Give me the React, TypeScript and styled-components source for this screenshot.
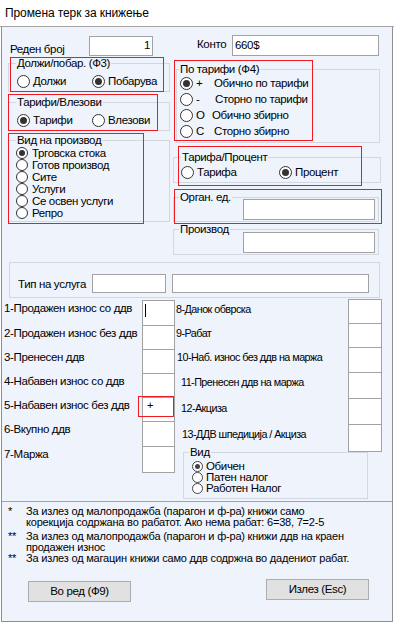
import React from "react";
import styled, { createGlobalStyle } from "styled-components";

const GlobalStyle = createGlobalStyle`
  html, body { margin: 0; padding: 0; background: #ffffff; }
  body {
    font-family: "Liberation Sans", Arial, sans-serif;
    font-size: 11.5px;
    letter-spacing: -0.35px;
    color: #000;
  }
  *, *::before, *::after { box-sizing: border-box; }
`;

const Window = styled.div`
  width: 394px;
  height: 622px;
  display: flex;
  flex-direction: column;
  background: #fff;
`;

const TitleBar = styled.div`
  flex: none;
  height: 27px;
  border-bottom: 1px solid #a3a3a3;
  padding: 5px 0 0 5px;
  font-size: 12px;
  letter-spacing: -0.1px;
  line-height: 16px;
  background: #fff;
`;

const Body = styled.div`
  flex: 1;
  margin-left: 1px;
  width: 392px;
  background: #eef3fc;
  border: 1px solid #8f8f8f;
  border-top: none;
  display: flex;
  flex-direction: column;
`;

const TopArea = styled.div`
  display: grid;
  grid-template-columns: 166px 208px;
  align-items: start;
  padding: 8px 0 0 5px;
`;

const Column = styled.div`
  display: flex;
  flex-direction: column;
`;

const FieldRow = styled.div<{ $pl: number }>`
  display: flex;
  align-items: flex-end;
  height: 21px;
  padding-left: ${(p) => p.$pl}px;
`;

const FieldLabel = styled.span<{ $w: number; $pb: number }>`
  flex: none;
  width: ${(p) => p.$w}px;
  line-height: 14px;
  padding-bottom: ${(p) => p.$pb}px;
  white-space: nowrap;
`;

const TextBox = styled.input<{ $w: number; $h: number; $right?: boolean; $mt?: number }>`
  flex: none;
  display: block;
  width: ${(p) => p.$w}px;
  height: ${(p) => p.$h}px;
  margin: ${(p) => p.$mt ?? 0}px 0 0 0;
  padding: 0 2px 2px 2px;
  border: 1px solid #a2a2a2;
  border-radius: 0;
  background: #fff;
  color: #000;
  font: inherit;
  letter-spacing: inherit;
  text-align: ${(p) => (p.$right ? "right" : "left")};
  outline: none;
`;

const Shell = styled.div<{ $mt: number; $ml: number }>`
  position: relative;
  margin: ${(p) => p.$mt}px 0 0 ${(p) => p.$ml}px;
`;

const Frame = styled.fieldset<{ $w: number; $h: number }>`
  display: block;
  margin: 0;
  padding: 0;
  min-width: 0;
  width: ${(p) => p.$w}px;
  height: ${(p) => p.$h}px;
  border: 1px solid #d3d8e0;
`;

const Caption = styled.legend<{ $off: number; $lh: number }>`
  margin-left: ${(p) => p.$off}px;
  padding: 0 1px;
  line-height: ${(p) => p.$lh}px;
  height: ${(p) => p.$lh}px;
  white-space: nowrap;
`;

const RedMark = styled.div<{ $l: number; $t: number; $w: number; $h: number }>`
  position: absolute;
  left: ${(p) => p.$l}px;
  top: ${(p) => p.$t}px;
  width: ${(p) => p.$w}px;
  height: ${(p) => p.$h}px;
  border: 1px solid #f01a22;
  background: transparent;
  pointer-events: none;
  z-index: 3;
`;

type Box = { l: number; t: number; w: number; h: number };

function GroupBox(props: {
  legend?: string;
  w: number;
  h: number;
  mt?: number;
  ml?: number;
  off?: number;
  lh?: number;
  mark?: Box;
  children?: React.ReactNode;
}) {
  const { legend, w, h, mt = 0, ml = 0, off = 5, lh = 14, mark, children } = props;
  return (
    <Shell $mt={mt} $ml={ml}>
      <Frame $w={w} $h={h}>
        {legend !== undefined && (
          <Caption $off={off} $lh={lh}>
            {legend}
          </Caption>
        )}
        {children}
      </Frame>
      {mark && <RedMark $l={mark.l} $t={mark.t} $w={mark.w} $h={mark.h} />}
    </Shell>
  );
}

const RadioRow = styled.div<{ $pt: number; $pl: number }>`
  display: flex;
  align-items: center;
  padding: ${(p) => p.$pt}px 0 0 ${(p) => p.$pl}px;
`;

const RadioStack = styled.div<{ $pl: number; $mt?: number }>`
  display: flex;
  flex-direction: column;
  padding-left: ${(p) => p.$pl}px;
  margin-top: ${(p) => p.$mt ?? 0}px;
`;

const Choice = styled.span<{ $w?: number; $gap: number; $lh: number }>`
  display: flex;
  align-items: center;
  flex: none;
  gap: ${(p) => p.$gap}px;
  width: ${(p) => (p.$w ? `${p.$w}px` : "auto")};
  height: ${(p) => p.$lh}px;
  line-height: ${(p) => p.$lh}px;
  white-space: nowrap;
`;

const Bullet = styled.span<{ $size: number; $dot: number; $on?: boolean; $tone: string }>`
  position: relative;
  flex: none;
  width: ${(p) => p.$size}px;
  height: ${(p) => p.$size}px;
  border-radius: 50%;
  border: 1px solid ${(p) => p.$tone};
  background: #fff;
  &::after {
    content: "";
    display: ${(p) => (p.$on ? "block" : "none")};
    position: absolute;
    left: 50%;
    top: 50%;
    width: ${(p) => p.$dot}px;
    height: ${(p) => p.$dot}px;
    margin: ${(p) => -p.$dot / 2}px 0 0 ${(p) => -p.$dot / 2}px;
    border-radius: 50%;
    background: ${(p) => p.$tone};
  }
`;

const Prefix = styled.span<{ $w: number }>`
  flex: none;
  width: ${(p) => p.$w}px;
`;

function Radio(props: {
  label: string;
  on?: boolean;
  w?: number;
  size?: number;
  dot?: number;
  gap?: number;
  lh?: number;
  tone?: string;
  prefix?: string;
  pw?: number;
}) {
  const { label, on, w, size = 13, dot = 7, gap = 3, lh = 14, tone = "#333", prefix, pw = 15 } = props;
  return (
    <Choice $w={w} $gap={gap} $lh={lh}>
      <Bullet $size={size} $dot={dot} $on={on} $tone={tone} />
      {prefix !== undefined && <Prefix $w={pw}>{prefix}</Prefix>}
      <span>{label}</span>
    </Choice>
  );
}

const InputLine = styled.div<{ $mt: number }>`
  display: flex;
  justify-content: flex-end;
  padding-right: 3px;
  margin-top: ${(p) => p.$mt}px;
`;

const ServiceRow = styled.div`
  display: flex;
  align-items: center;
  gap: 6px;
  padding: 11px 0 0 8px;
`;

const ServiceLabel = styled.span`
  width: 68px;
  flex: none;
  line-height: 14px;
  white-space: nowrap;
`;

const Ledger = styled.div`
  flex: none;
  display: grid;
  grid-template-columns: 173px 207px;
  height: 203px;
`;

const LedgerCol = styled.div<{ $pt: number }>`
  display: flex;
  flex-direction: column;
  padding-top: ${(p) => p.$pt}px;
`;

const LedgerRow = styled.div<{ $h: number }>`
  display: flex;
  height: ${(p) => p.$h}px;
`;

const LedgerLabel = styled.span<{ $pl: number; $pt: number; $narrow?: boolean }>`
  flex: 1;
  min-width: 0;
  padding: ${(p) => p.$pt}px 0 0 ${(p) => p.$pl}px;
  line-height: 14px;
  white-space: nowrap;
  font-size: ${(p) => (p.$narrow ? "10.8px" : "11.5px")};
  letter-spacing: ${(p) => (p.$narrow ? "-0.55px" : "-0.35px")};
`;

const Cell = styled.div<{ $w: number; $last?: boolean }>`
  position: relative;
  z-index: 2;
  flex: none;
  width: ${(p) => p.$w}px;
  background: #fff;
  border: 1px solid #a2a2a2;
  border-bottom: ${(p) => (p.$last ? "1px solid #a2a2a2" : "none")};
  padding: 0 0 0 2px;
  line-height: 14px;
`;

const Caret = styled.span`
  display: block;
  width: 1px;
  height: 13px;
  margin-top: 3px;
  background: #000;
`;

const CellText = styled.span`
  display: block;
  padding: 0 0 0 2px;
  font-size: 11px;
`;

const Footer = styled.div`
  flex: 1;
  border-top: 1px solid #a3a3a3;
  padding-top: 4px;
  display: flex;
  flex-direction: column;
`;

const Note = styled.div<{ $mt: number; $lh: number }>`
  display: grid;
  grid-template-columns: 18px 1fr;
  padding-left: 6px;
  margin-top: ${(p) => p.$mt}px;
  font-size: 11px;
  letter-spacing: -0.2px;
  line-height: ${(p) => p.$lh}px;
  white-space: nowrap;
`;

const ButtonRow = styled.div`
  display: flex;
  align-items: flex-start;
  margin-top: 15px;
  padding-left: 26px;
`;

const Button = styled.button<{ $mt: number; $ml: number }>`
  flex: none;
  width: 103px;
  height: 21px;
  margin: ${(p) => p.$mt}px 0 0 ${(p) => p.$ml}px;
  padding: 0;
  background: #e1e1e1;
  border: 1px solid #adadad;
  border-radius: 0;
  font: inherit;
  letter-spacing: inherit;
  color: #000;
  line-height: 17px;
`;

const productKinds = [
  { t: "Трговска стока", on: true },
  { t: "Готов производ" },
  { t: "Сите" },
  { t: "Услуги" },
  { t: "Се освен услуги" },
  { t: "Репро" },
];

const tariffModes = [
  { p: "+", t: "Обично по тарифи", on: true, pw: 15 },
  { p: "-", t: "Сторно по тарифи", pw: 16 },
  { p: "O", t: "Обично збирно", pw: 13 },
  { p: "C", t: "Сторно збирно", pw: 15 },
];

const leftRows = [
  { label: "1-Продажен износ со ддв", h: 25, caret: true },
  { label: "2-Продажен износ без ддв", h: 24 },
  { label: "3-Пренесен ддв", h: 24 },
  { label: "4-Набавен износ со ддв", h: 24 },
  { label: "5-Набавен износ без ддв", h: 24, plus: true },
  { label: "6-Вкупно ддв", h: 25 },
  { label: "7-Маржа", h: 27 },
];

const rightRows = [
  { label: "8-Данок обврска", h: 24, ind: 1 },
  { label: "9-Рабат", h: 24, ind: 1 },
  { label: "10-Наб. износ без ддв на маржа", h: 25, ind: 2 },
  { label: "11-Пренесен ддв на маржа", h: 26, ind: 6 },
  { label: "12-Акциза", h: 26, ind: 6 },
  { label: "13-ДДВ шпедиција / Акциза", h: 28, ind: 7 },
];

const kinds = [{ t: "Обичен", on: true }, { t: "Патен налог" }, { t: "Работен Налог" }];

export default function App() {
  return (
    <>
      <GlobalStyle />
      <Window>
        <TitleBar>Промена терк за книжење</TitleBar>
        <Body>
          <TopArea>
            <Column>
              <FieldRow $pl={3}>
                <FieldLabel $w={79} $pb={0}>Реден број</FieldLabel>
                <TextBox $w={64} $h={20} $right value="1" readOnly />
              </FieldRow>

              <GroupBox legend="Должи/побар. (Ф3)" w={162} h={36} mt={0} ml={1} off={7} mark={{ l: 2, t: 1, w: 154, h: 35 }}>
                <RadioRow $pt={4} $pl={8}>
                  <Radio label="Должи" w={75} />
                  <Radio label="Побарува" on />
                </RadioRow>
              </GroupBox>

              <GroupBox legend="Тарифи/Влезови" w={162} h={36} mt={3} ml={1} off={7} mark={{ l: 0, t: -1, w: 150, h: 37 }}>
                <RadioRow $pt={4} $pl={8}>
                  <Radio label="Тарифи" on w={75} />
                  <Radio label="Влезови" />
                </RadioRow>
              </GroupBox>

              <GroupBox legend="Вид на производ" w={162} h={89} mt={2} ml={1} off={7} mark={{ l: 0, t: 0, w: 136, h: 91 }}>
                <RadioStack $pl={7}>
                  {productKinds.map((k) => (
                    <Radio key={k.t} label={k.t} on={k.on} size={12} dot={6} gap={4} lh={12} />
                  ))}
                </RadioStack>
              </GroupBox>
            </Column>

            <Column>
              <FieldRow $pl={24}>
                <FieldLabel $w={35} $pb={5}>Конто</FieldLabel>
                <TextBox $w={147} $h={21} value="660$" readOnly />
              </FieldRow>

              <GroupBox legend="По тарифи (Ф4)" w={204} h={81} mt={6} ml={3} off={2} mark={{ l: -2, t: -2, w: 139, h: 81 }}>
                <RadioStack $pl={3} $mt={-1}>
                  {tariffModes.map((m) => (
                    <Radio key={m.t} label={m.t} on={m.on} prefix={m.p} pw={m.pw} lh={16} />
                  ))}
                </RadioStack>
              </GroupBox>

              <GroupBox legend="Тарифа/Процент" w={208} h={33} mt={7} off={7} mark={{ l: 5, t: -4, w: 184, h: 40 }}>
                <RadioRow $pt={1} $pl={7}>
                  <Radio label="Тарифа" w={98} />
                  <Radio label="Процент" on />
                </RadioRow>
              </GroupBox>

              <GroupBox legend="Орган. ед." w={206} h={32} mt={7} off={5} mark={{ l: 1, t: -1, w: 208, h: 35 }}>
                <InputLine $mt={-5}>
                  <TextBox $w={132} $h={21} value="" readOnly />
                </InputLine>
              </GroupBox>

              <GroupBox legend="Производ" w={206} h={33} mt={0} off={5}>
                <InputLine $mt={-4}>
                  <TextBox $w={132} $h={21} value="" readOnly />
                </InputLine>
              </GroupBox>
            </Column>
          </TopArea>

          <GroupBox w={371} h={36} mt={7} ml={7}>
            <ServiceRow>
              <ServiceLabel>Тип на услуга</ServiceLabel>
              <TextBox $w={74} $h={19} value="" readOnly />
              <TextBox $w={197} $h={19} value="" readOnly />
            </ServiceRow>
          </GroupBox>

          <Ledger>
            <LedgerCol $pt={2}>
              {leftRows.map((r, i) => (
                <LedgerRow key={r.label} $h={r.h}>
                  <LedgerLabel $pl={2} $pt={1}>{r.label}</LedgerLabel>
                  <Cell $w={33} $last={i === leftRows.length - 1}>
                    {r.caret && <Caret />}
                    {r.plus && <CellText>+</CellText>}
                    {r.plus && <RedMark $l={-5} $t={-2} $w={36} $h={21} />}
                  </Cell>
                </LedgerRow>
              ))}
            </LedgerCol>
            <LedgerCol $pt={1}>
              {rightRows.map((r, i) => (
                <LedgerRow key={r.label} $h={r.h}>
                  <LedgerLabel $pl={r.ind} $pt={3} $narrow>{r.label}</LedgerLabel>
                  <Cell $w={34} $last={i === rightRows.length - 1} />
                </LedgerRow>
              ))}
              <GroupBox legend="Вид" w={185} h={53} mt={-6} ml={8} off={5} lh={12}>
                <RadioStack $pl={8} $mt={3}>
                  {kinds.map((k) => (
                    <Radio key={k.t} label={k.t} on={k.on} size={11} dot={5} gap={3} lh={11} tone="#444" />
                  ))}
                </RadioStack>
              </GroupBox>
            </LedgerCol>
          </Ledger>

          <Footer>
            <Note $mt={0} $lh={11}>
              <span>*</span>
              <span>
                За излез од малопродажба (парагон и ф-ра) книжи само
                <br />
                корекција содржана во рабатот. Ако нема рабат: 6=38, 7=2-5
              </span>
            </Note>
            <Note $mt={3} $lh={11}>
              <span>**</span>
              <span>
                За излез од малопродажба (парагон и ф-ра) книжи ддв на краен
                <br />
                продажен износ
              </span>
            </Note>
            <Note $mt={0} $lh={11}>
              <span>**</span>
              <span>За излез од магацин книжи само ддв содржна во дадениот рабат.</span>
            </Note>
            <ButtonRow>
              <Button $mt={2} $ml={0}>Во ред (Ф9)</Button>
              <Button $mt={0} $ml={135}>Излез (Esc)</Button>
            </ButtonRow>
          </Footer>
        </Body>
      </Window>
    </>
  );
}
